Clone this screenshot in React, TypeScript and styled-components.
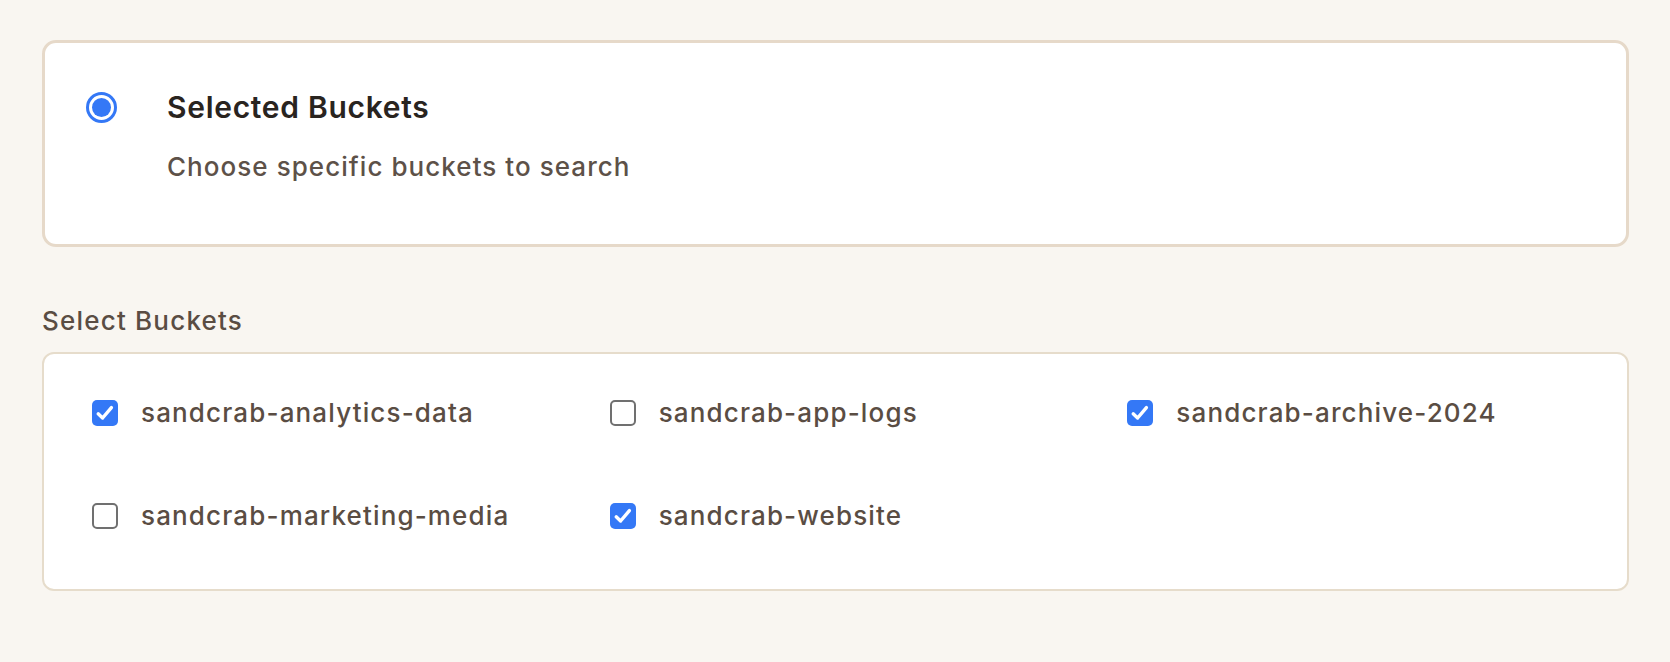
import React, { useState } from "react";
import styled, { createGlobalStyle } from "styled-components";

const GlobalStyle = createGlobalStyle`
  html, body {
    margin: 0;
    padding: 0;
    background: #f9f6f1;
  }
  body {
    font-family: Inter, "Noto Sans", "Liberation Sans", sans-serif;
    -webkit-font-smoothing: antialiased;
  }
  * {
    box-sizing: border-box;
  }
`;

const BLUE = "#3478f6";

const Page = styled.div`
  padding: 40px 41px 40px 42px;
`;

const OptionCard = styled.label`
  display: flex;
  align-items: flex-start;
  gap: 50px;
  min-height: 207px;
  padding: 44px 40px 56px 41px;
  background: #ffffff;
  border: 3px solid #e6d9c9;
  border-radius: 14px;
  cursor: pointer;
`;

const RadioSlot = styled.span`
  display: flex;
  align-items: center;
  height: 40px;
`;

const Radio = styled.span<{ checked: boolean }>`
  display: flex;
  align-items: center;
  justify-content: center;
  width: 31px;
  height: 31px;
  border-radius: 50%;
  border: 3px solid ${props => (props.checked ? BLUE : "#767676")};
  background: #ffffff;

  &:after {
    content: "";
    width: 19px;
    height: 19px;
    border-radius: 50%;
    background: ${props => (props.checked ? BLUE : "transparent")};
  }
`;

const OptionText = styled.span`
  display: flex;
  flex-direction: column;
  gap: 22px;
`;

const OptionTitle = styled.span`
  font-size: 30px;
  line-height: 40px;
  font-weight: 600;
  letter-spacing: 0.7px;
  color: #29241f;
`;

const OptionDescription = styled.span`
  font-size: 26px;
  line-height: 36px;
  font-weight: 500;
  letter-spacing: 1.05px;
  color: #5d5148;
`;

const SectionLabel = styled.div`
  margin: 57px 0 14px;
  font-size: 26px;
  line-height: 34px;
  font-weight: 500;
  letter-spacing: 1.2px;
  color: #5a4d43;
`;

const BucketCard = styled.div`
  display: grid;
  grid-template-columns: repeat(3, 1fr);
  column-gap: 66px;
  row-gap: 53px;
  padding: 34px 48px 48px;
  background: #ffffff;
  border: 2px solid #e6dccb;
  border-radius: 12px;
`;

const BucketItem = styled.label`
  display: flex;
  align-items: center;
  gap: 23px;
  height: 50px;
  cursor: pointer;
`;

const CheckBox = styled.span<{ checked: boolean }>`
  display: flex;
  align-items: center;
  justify-content: center;
  flex: none;
  width: 26px;
  height: 26px;
  border-radius: 5px;
  background: ${props => (props.checked ? BLUE : "#ffffff")};
  border: ${props => (props.checked ? "none" : "2px solid #707070")};
`;

const BucketName = styled.span`
  font-size: 26px;
  line-height: 34px;
  font-weight: 500;
  letter-spacing: 1.15px;
  color: #5a4d43;
  white-space: nowrap;
`;

const HiddenInput = styled.input`
  position: absolute;
  opacity: 0;
  width: 0;
  height: 0;
`;

const buckets = [
  { name: "sandcrab-analytics-data", checked: true },
  { name: "sandcrab-app-logs", checked: false },
  { name: "sandcrab-archive-2024", checked: true },
  { name: "sandcrab-marketing-media", checked: false },
  { name: "sandcrab-website", checked: true }
];

const CheckMark = () => (
  <svg width="24" height="24" viewBox="0 0 24 24" fill="none">
    <path
      d="M5.2 12.8 L9.6 17 L18.4 6.6"
      stroke="#ffffff"
      strokeWidth="3.4"
      strokeLinecap="round"
      strokeLinejoin="round"
    />
  </svg>
);

const App = () => {
  const [selected, setSelected] = useState<Record<string, boolean>>(() =>
    Object.fromEntries(buckets.map(b => [b.name, b.checked]))
  );

  const toggle = (name: string) => {
    setSelected({ ...selected, [name]: !selected[name] });
  };

  return (
    <>
      <GlobalStyle />
      <Page>
        <OptionCard>
          <RadioSlot>
            <Radio checked />
          </RadioSlot>
          <OptionText>
            <OptionTitle>Selected Buckets</OptionTitle>
            <OptionDescription>Choose specific buckets to search</OptionDescription>
          </OptionText>
        </OptionCard>

        <SectionLabel>Select Buckets</SectionLabel>
        <BucketCard>
          {buckets.map(bucket => (
            <BucketItem key={bucket.name}>
              <HiddenInput
                type="checkbox"
                checked={selected[bucket.name]}
                onChange={() => toggle(bucket.name)}
              />
              <CheckBox checked={selected[bucket.name]}>
                {selected[bucket.name] && <CheckMark />}
              </CheckBox>
              <BucketName>{bucket.name}</BucketName>
            </BucketItem>
          ))}
        </BucketCard>
      </Page>
    </>
  );
};

export default App;
